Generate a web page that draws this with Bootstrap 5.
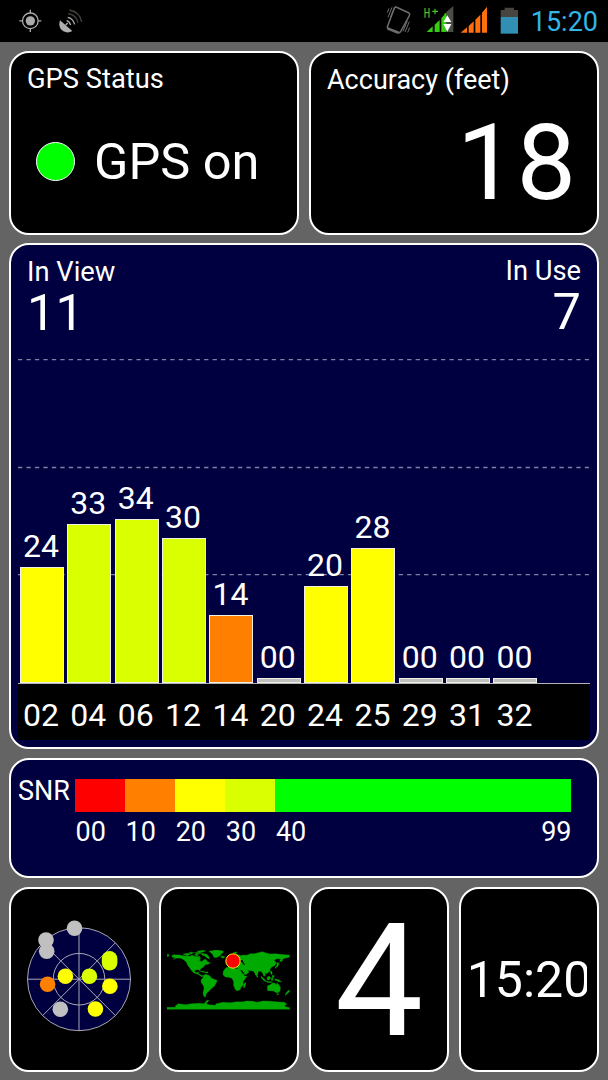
<!DOCTYPE html>
<html lang="en">
<head>
<meta charset="utf-8">
<meta name="viewport" content="width=device-width, initial-scale=1">
<title>GPS Status</title>
<link rel="stylesheet" href="https://cdn.jsdelivr.net/npm/bootstrap@5.3.0/dist/css/bootstrap.min.css">
<style>
body{font-family:Roboto,"Liberation Sans",sans-serif;background:#646464;color:#fff;height:1080px;overflow:hidden;line-height:1}
svg{display:block;flex:none}
.statusbar{height:42px;background:#000;padding:0 10px 0 19px}
.signals svg{margin-top:-2px}
.clock{font-size:27px;color:#33b5e5;margin:2px 0 0 12px}
.dash{display:grid;grid-template-columns:repeat(4,140px);grid-template-rows:184px 8px 506px 9px 120px 9px 185px;column-gap:10px;padding:9px 9px 0}
.tile{background:#000;border:2px solid #fff;border-radius:20px;color:#fff;overflow:hidden;min-width:0}
.navy{background:#000040}
.half{grid-column:span 2}.full{grid-column:1/-1}
.r1{grid-row:1}.r3{grid-row:3}.r5{grid-row:5}.r7{grid-row:7}
.cap{font-size:27.3px;line-height:1}
.led{width:39px;height:39px;border-radius:50%;background:#0f0;border:1.5px solid #fff;margin:-2px 0 0 25px}
.gps{font-size:50.5px;margin-left:19px}
.acc{font-size:106px;line-height:1;padding-right:21px;margin-top:16px}
.count{font-size:50.5px;line-height:1;margin-top:2px}
.plot{height:324px;margin:0 7px}
.bars{gap:3.35px;padding-left:2px}
.sat{width:44px;flex:none}
.val{font-size:32px;margin:0 1px 5px -1px}
.stick{width:44px;height:max(5px,calc(var(--snr)*4.83px));border:1px solid #f0f0e4;background:var(--c)}
.g{--c:#c0c0c0}.o{--c:#ff8000}.y{--c:#ff0}.l{--c:#d9ff00}
.ids{height:57px;margin:0 7px 7px;border-top:1px solid #b4b4b8;background:#000;font-size:32px;padding:15px 0 0 1px}
.ids>div{width:44px;text-align:center}
.snr{font-size:27px;width:57px}
.ramp{width:496px;height:33px}
.ramp>div,.marks>div{width:50.1px;flex:none}
.marks{width:496px;font-size:27px;margin:7px 0 0 64.5px}
.big{font-size:157.5px;line-height:1;margin-top:4px}
.time{font-size:50px;width:115.5px;overflow:hidden}
.time span{margin:0 -5px;white-space:nowrap}
</style>
</head>
<body>
<header class="statusbar d-flex align-items-center">
  <svg width="23" height="24" viewBox="57 28 69 72"><g fill="none" stroke="#aaa9ac" stroke-width="4"><circle cx="91" cy="63.500" r="23.500"/><path d="M91 30v10M91 87v10M58 63.500h10M114 63.500h10"/></g><circle cx="91" cy="63.500" r="14" fill="#aaa9ac"/></svg>
  <svg class="ms-3" width="25" height="24" viewBox="174 28 75 72"><path d="M180 62L217 94Q204 102 190 95Q173 84 180 62Z" fill="#b0afb2"/><path d="M197 76l6-6" stroke="#b0afb2" stroke-width="4"/><g fill="none" stroke-width="4"><path d="M200 63q8 2 12 13M203 53q16 3 21 21" stroke="#b0afb2"/><path d="M204 42q25 3 30 28M208 31q32 6 37 36" stroke="#45433f"/></g></svg>
  <div class="signals ms-auto d-flex align-items-center">
    <svg width="26" height="30" viewBox="18 18 78 90"><g fill="none" stroke="#6d6d6d" stroke-width="4.500"><path d="M48 24L87 42Q91 45 88 50L62 98Q58 104 52 101L25 89Q20 86 23 81L43 28Q45 23 48 24Z"/><path d="M27 28l-5 13M36 25L24 55M44 25L31 55M88 68L75 99M82 66L69 97M89 86l-6 14" stroke-width="3"/></g><path d="M22 84L59 98L53 104L22 92Z" fill="#6d6d6d"/></svg>
    <svg style="margin-left:11px" width="32" height="30" viewBox="130 15 96 90"><path d="M200 36L221 18V96H200Z" fill="#4b4b48"/><path d="M141 96L159 79V96ZM165 96V74L180 60V96ZM185 96V54L200 38V96Z" fill="#35cc12"/><path d="M197 96V40" stroke="#35cc12" stroke-width="5"/><path d="M203 46L215 66H191ZM203 95L215 72H191Z" fill="#fff"/><path d="M136 24V53M148 24V53M136 38H148M158 34H175M166 26V43" fill="none" stroke="#42c927" stroke-width="3.500"/></svg>
    <svg style="margin-left:5px" width="28" height="30" viewBox="243 15 84 90"><path d="M245 98L264 82V98ZM269 98V78L284 64V98ZM289 98V59L304 44V98ZM309 98V38L324 20V98Z" fill="#ff6f0c"/></svg>
    <svg style="margin-left:12px" width="19" height="30" viewBox="362 15 57 90"><path d="M376 23H404V30H416V51H364V30H376Z" fill="#484440"/><path d="M364 51H416V101H364Z" fill="#328fb4"/></svg>
    <div class="clock">15:20</div>
  </div>
</header>

<main class="dash">
  <section class="card tile half r1">
    <div class="cap" style="padding:13px 0 0 16px">GPS Status</div>
    <div class="d-flex align-items-center" style="margin-top:44px"><div class="led"></div><div class="gps">GPS on</div></div>
  </section>
  <section class="card tile half r1">
    <div class="cap" style="padding:14px 0 0 16px;font-size:27px">Accuracy (feet)</div>
    <div class="acc text-end">18</div>
  </section>

  <section class="card tile navy full r3">
    <div class="d-flex justify-content-between">
      <div style="padding:14px 0 0 16px"><div class="cap">In View</div><div class="count">11</div></div>
      <div class="text-end" style="padding:13px 16px 0 0"><div class="cap">In Use</div><div class="count">7</div></div>
    </div>
    <div class="plot position-relative mt-auto">
      <svg class="position-absolute top-0 start-0" width="572" height="324"><g stroke="#8080a0" stroke-width="1.300" stroke-dasharray="4.300 4.160"><path d="M0 .7H571M0 108.500H571M0 215.700H571"/></g></svg>
      <div class="bars d-flex align-items-end h-100 position-relative">
        <div class="sat text-center y"><div class="val">24</div><div class="stick" style="--snr:24"></div></div>
        <div class="sat text-center l"><div class="val">33</div><div class="stick" style="--snr:33"></div></div>
        <div class="sat text-center l"><div class="val">34</div><div class="stick" style="--snr:34"></div></div>
        <div class="sat text-center l"><div class="val">30</div><div class="stick" style="--snr:30"></div></div>
        <div class="sat text-center o"><div class="val">14</div><div class="stick" style="--snr:14"></div></div>
        <div class="sat text-center g"><div class="val">00</div><div class="stick" style="--snr:0"></div></div>
        <div class="sat text-center y"><div class="val">20</div><div class="stick" style="--snr:20"></div></div>
        <div class="sat text-center y"><div class="val">28</div><div class="stick" style="--snr:28"></div></div>
        <div class="sat text-center g"><div class="val">00</div><div class="stick" style="--snr:0"></div></div>
        <div class="sat text-center g"><div class="val">00</div><div class="stick" style="--snr:0"></div></div>
        <div class="sat text-center g"><div class="val">00</div><div class="stick" style="--snr:0"></div></div>
      </div>
    </div>
    <div class="ids bars d-flex"><div>02</div><div>04</div><div>06</div><div>12</div><div>14</div><div>20</div><div>24</div><div>25</div><div>29</div><div>31</div><div>32</div></div>
  </section>

  <section class="card tile navy full r5">
    <div class="d-flex" style="padding:19px 0 0 7px">
      <div class="snr" style="margin-top:-1px">SNR</div>
      <div class="ramp d-flex"><div style="background:#f00"></div><div style="background:#ff8000"></div><div style="background:#ff0"></div><div style="background:#d9ff00"></div><div class="flex-fill" style="background:#0f0"></div></div>
    </div>
    <div class="marks d-flex"><div>00</div><div>10</div><div>20</div><div>30</div><div>40</div><div class="ms-auto text-end">99</div></div>
  </section>

  <section class="card tile r7">
    <svg width="136" height="181" viewBox="11 889 136 181">
      <circle cx="79" cy="979.200" r="51.500" fill="#000040"/>
      <g fill="none" stroke="#a8a8b4" stroke-width="1"><circle cx="79" cy="979.200" r="51.500"/><circle cx="79" cy="979.200" r="25.800"/><path d="M27.500 979.200h103M79 927.700v103M42.600 942.800l72.800 72.800M115.400 942.800l-72.800 72.800"/></g>
      <g fill="#c0c0c0"><circle cx="74.500" cy="928.300" r="7.800"/><circle cx="46" cy="940" r="7.800"/><circle cx="46.700" cy="951.300" r="7.800"/><circle cx="60.300" cy="1009.200" r="7.800"/></g>
      <g fill="#d9ff00"><path d="M101.800 958.700a7.800 7.800 0 0 1 15.600 0v4.100a7.800 7.800 0 0 1-15.600 0Z"/><circle cx="89.400" cy="976.300" r="7.800"/></g>
      <g fill="#ff0"><circle cx="65.400" cy="976.300" r="7.800"/><circle cx="109.900" cy="986.300" r="7.800"/><circle cx="95.400" cy="1009" r="7.800"/></g>
      <circle cx="47.600" cy="984.300" r="7.800" fill="#ff8000"/>
    </svg>
  </section>
  <section class="card tile r7 align-items-center">
    <svg width="123" height="60" viewBox="36 60 369 180" style="margin:61px 2px 0 0">
      <g fill="#0a0" stroke="#0a0" stroke-width="1">
        <path d="M36 73l5 0 1 5 -5 2ZM50 77L56 74 72 75 90 78 104 79 112 76 124 80 134 79 138 85 133 91 140 95 146 89 152 88 158 95 166 99 158 103 150 104 146 111 138 115 135 121 129 119 120 120 119 126 126 128 131 125 130 131 138 135 145 138 140 140 129 133 117 129 110 122 104 113 98 106 94 96 86 89 78 85 66 84 55 88 62 83 52 82Z"/>
        <path d="M84 72l14-2 8 4-10 3ZM100 69l10-3 6 3-8 3ZM118 68l12-1 8 3-10 2ZM118 74l8-2 4 4-6 2ZM126 64l18-3 8 2-16 5ZM140 70l16 3 6 8 2 6-8-3-6-6-10-3ZM162 64l20-4 20 2 4 4-7 6-5 6-11 5-7-2-3-8ZM133 122l12 2 5 3-6 0ZM151 126h8v3h-8Z"/>
        <path d="M145 136L152 133 164 137 170 145 186 151 184 158 178 169 171 174 164 181 158 187 153 192 152 200 147 200 144 190 147 176 146 168 139 158 138 150 144 143Z"/>
        <path d="M196 80l8-2 6 3-6 4ZM234 69l6-3 7 1-5 4ZM213 103L214 95 221 94 218 88 226 84 234 77 246 73 258 77 264 75 276 76 286 71 298 71 310 68 322 65 333 69 346 72 360 71 376 73 390 74 404 76 403 82 392 84 384 86 381 94 374 95 377 87 366 86 357 91 364 98 358 108 350 111 346 116 344 124 335 131 330 128 331 136 327 139 323 130 318 124 310 124 307 137 303 137 296 124 287 122 278 121 282 127 274 133 265 136 259 124 253 117 246 115 244 109 235 109 227 105 220 106Z"/>
        <path d="M205 124L212 114 222 110 231 109 241 116 256 117 262 131 269 138 276 138 270 147 264 155 265 166 258 172 255 180 245 182 240 177 236 166 236 155 231 145 221 142 211 141 204 134ZM267 161l6-4-3 14-5 3Z"/>
        <path d="M318 139l6 4 8 8 2 4-7-3-8-9ZM336 142l7-4 4 5-4 7-6-1ZM349 144l5-1-1 9-4-1ZM334 154l14 1 4 3-16-1ZM359 146l12 3 9 7-9-1-11-5ZM346 123l4 0 2 8-4 3ZM352 136l6 1-2 6-5-2ZM365 98l8 1-4 10-9 6 1-4 5-5ZM306 136l3 4-2 3-2-3Z"/>
        <path d="M337 168L348 163 353 158 360 160 364 164 366 158 370 163 376 171 376 179 372 187 364 188 356 183 348 182 338 182ZM400 181l5 3-8 7-7 6 3-7ZM366 191l5 0-2 4-3-1Z"/>
        <path d="M36 232L64 232 60 229 70 221 90 224 110 221 134 220 147 221 156 211 162 211 158 216 153 221 162 224 181 226 184 221 204 217 226 218 247 215 260 216 275 213 294 214 306 217 324 213 348 214 370 216 388 217 395 222 388 229 404 233V238H36Z"/>
      </g>
      <path d="M255 91l7-1 3 6 5 8-3 2-5-8-6-3ZM256 121l5 0 9 13-5-2ZM133 83l8-2 6 4-3 7-5-5Z" fill="#000"/>
      <circle cx="234" cy="93" r="21.500" fill="#f00" stroke="#f5e51c" stroke-width="3"/>
    </svg>
  </section>
  <section class="card tile r7 align-items-center justify-content-center"><div class="big">4</div></section>
  <section class="card tile r7 align-items-center justify-content-center"><div class="time d-flex justify-content-center"><span>15:20</span></div></section>
</main>
<script src="https://cdn.jsdelivr.net/npm/bootstrap@5.3.0/dist/js/bootstrap.bundle.min.js"></script>
</body>
</html>
